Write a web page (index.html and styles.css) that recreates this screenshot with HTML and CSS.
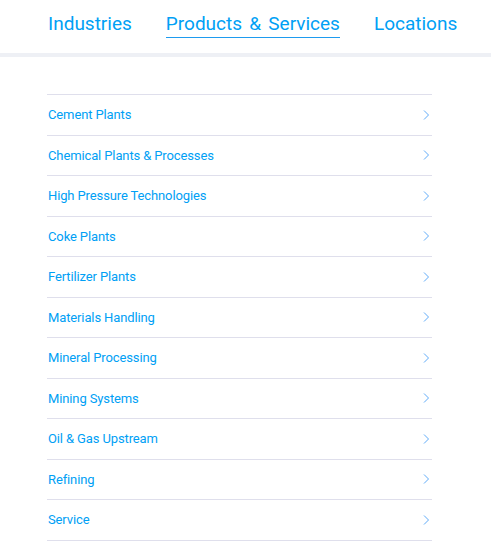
FILE: index.html
```html
<!DOCTYPE html>
<html lang="en">
<head>
<meta charset="utf-8">
<link rel="stylesheet" href="styles.css">
</head>
<body>
<header class="topbar">
  <nav class="mainnav">
    <a class="navlink" href="#">Industries</a>
    <a class="navlink active" href="#">Products &amp; Services</a>
    <a class="navlink" href="#">Locations</a>
    <a class="navlink" href="#">Investors</a>
  </nav>
</header>
<main class="content">
  <ul class="menu">
    <li><a href="#"><span>Cement Plants</span><svg class="chev" viewBox="0 0 7 10"><path d="M1 0.5 L5.5 5 L1 9.5"/></svg></a></li>
    <li><a href="#"><span>Chemical Plants &amp; Processes</span><svg class="chev" viewBox="0 0 7 10"><path d="M1 0.5 L5.5 5 L1 9.5"/></svg></a></li>
    <li><a href="#"><span>High Pressure Technologies</span><svg class="chev" viewBox="0 0 7 10"><path d="M1 0.5 L5.5 5 L1 9.5"/></svg></a></li>
    <li><a href="#"><span>Coke Plants</span><svg class="chev" viewBox="0 0 7 10"><path d="M1 0.5 L5.5 5 L1 9.5"/></svg></a></li>
    <li><a href="#"><span>Fertilizer Plants</span><svg class="chev" viewBox="0 0 7 10"><path d="M1 0.5 L5.5 5 L1 9.5"/></svg></a></li>
    <li><a href="#"><span>Materials Handling</span><svg class="chev" viewBox="0 0 7 10"><path d="M1 0.5 L5.5 5 L1 9.5"/></svg></a></li>
    <li><a href="#"><span>Mineral Processing</span><svg class="chev" viewBox="0 0 7 10"><path d="M1 0.5 L5.5 5 L1 9.5"/></svg></a></li>
    <li><a href="#"><span>Mining Systems</span><svg class="chev" viewBox="0 0 7 10"><path d="M1 0.5 L5.5 5 L1 9.5"/></svg></a></li>
    <li><a href="#"><span>Oil &amp; Gas Upstream</span><svg class="chev" viewBox="0 0 7 10"><path d="M1 0.5 L5.5 5 L1 9.5"/></svg></a></li>
    <li><a href="#"><span>Refining</span><svg class="chev" viewBox="0 0 7 10"><path d="M1 0.5 L5.5 5 L1 9.5"/></svg></a></li>
    <li><a href="#"><span>Service</span><svg class="chev" viewBox="0 0 7 10"><path d="M1 0.5 L5.5 5 L1 9.5"/></svg></a></li>
  </ul>
</main>
</body>
</html>
```
FILE: styles.css
```css
html, body {
  margin: 0;
  padding: 0;
  background: #ffffff;
  font-family: Roboto, "Liberation Sans", sans-serif;
  overflow: hidden;
}
.topbar {
  height: 53px;
  border-bottom: 4px solid #eef0f5;
  overflow: hidden;
}
.mainnav {
  display: flex;
  gap: 34px;
  padding-left: 48px;
  padding-top: 11px;
  white-space: nowrap;
}
.navlink {
  font-size: 19px;
  line-height: 25px;
  word-spacing: 2.5px;
  color: #00a0f5;
  text-decoration: none;
  padding-bottom: 1px;
  border-bottom: 1.5px solid transparent;
}
.navlink.active {
  border-bottom-color: #1e9bef;
}
.content {
  padding: 37px 0 0 47px;
}
.menu {
  list-style: none;
  margin: 0;
  padding: 0;
  width: 385px;
  border-top: 1px solid #dfdfec;
}
.menu li {
  border-bottom: 1px solid #dfdfec;
}
.menu a {
  display: flex;
  align-items: center;
  justify-content: space-between;
  height: 39.5px;
  padding: 0 2px 0 1px;
  color: #00a0f5;
  text-decoration: none;
  font-size: 13px;
  letter-spacing: -0.12px;
}
.chev {
  width: 7px;
  height: 10px;
  fill: none;
  stroke: #5eaaf8;
  stroke-width: 1;
}
```
